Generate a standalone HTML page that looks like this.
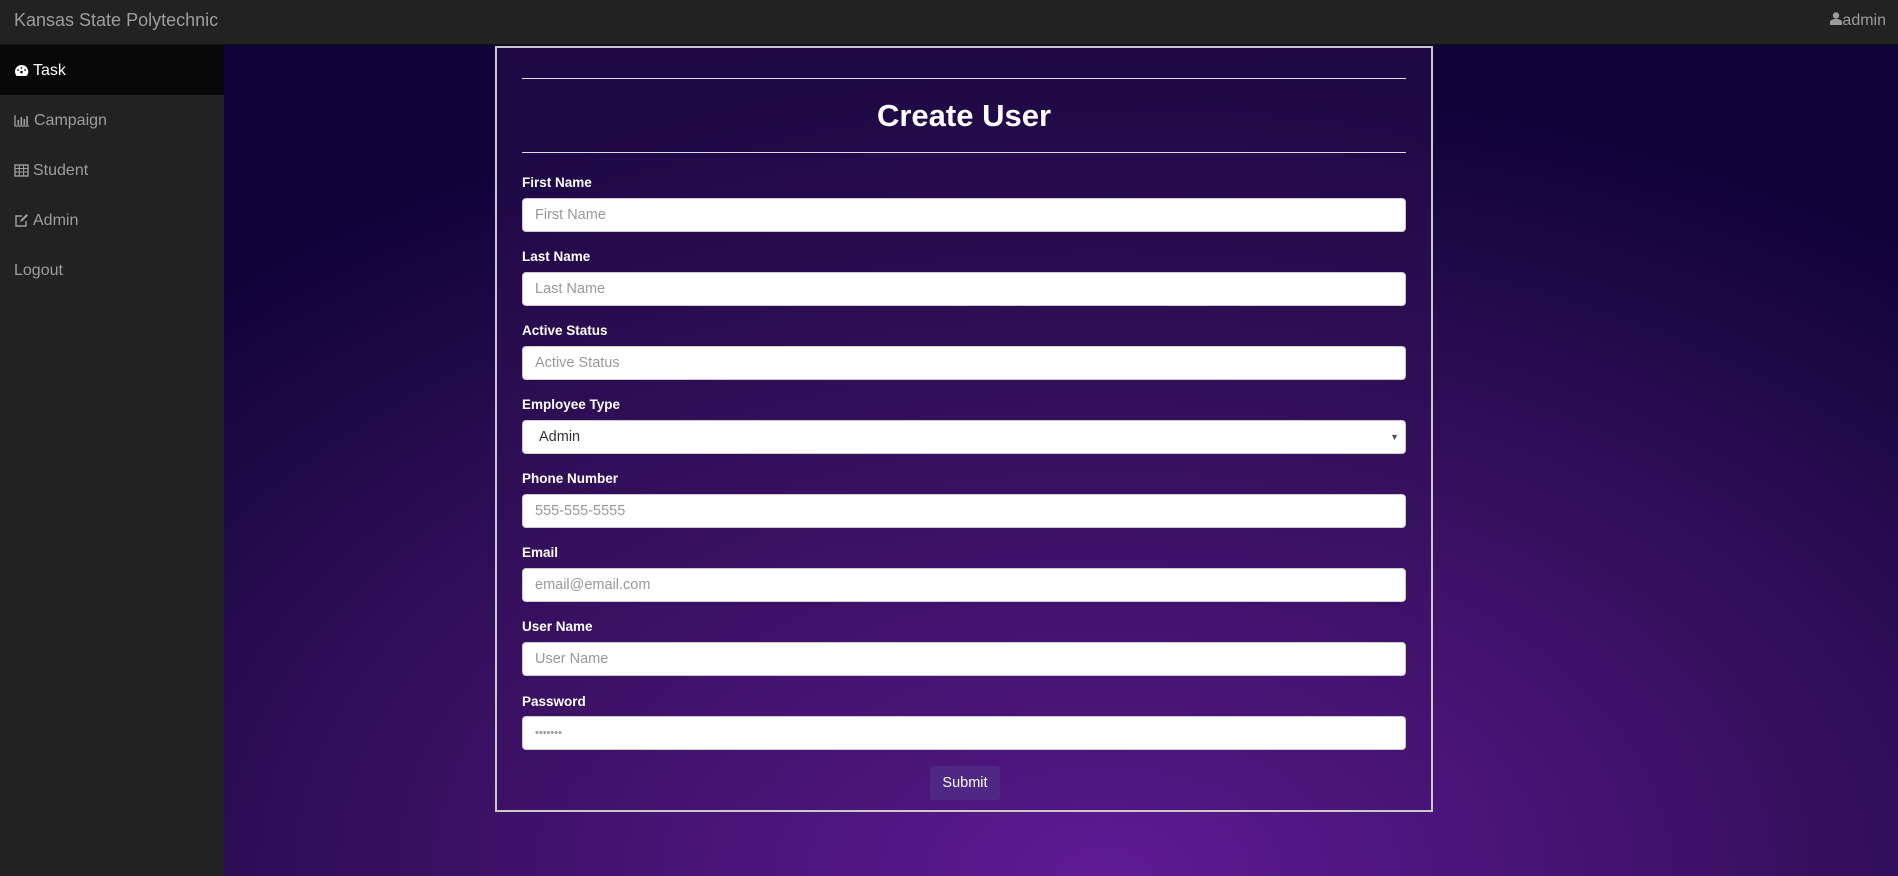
<!DOCTYPE html>
<html><head><meta charset="utf-8"><style>
*{box-sizing:border-box;margin:0;padding:0}
body{width:1898px;height:876px;overflow:hidden;font-family:"Liberation Sans",Arial,sans-serif;background:#222;position:relative}
.nav{position:absolute;left:0;top:0;width:1898px;height:45px;background:#222;border-bottom:1px solid #111}
.brand{position:absolute;left:14px;top:10px;font-size:18px;color:#9d9d9d}
.user{position:absolute;right:12px;top:12px;font-size:16px;color:#9d9d9d}
.side{position:absolute;left:0;top:45px;width:224px;height:831px;background:#222}
.item{height:50px;line-height:52px;padding-left:14px;font-size:16px;color:#9d9d9d}
.item.act{background:#080808;color:#fff}
.item svg{vertical-align:-2px;margin-right:4px}
.main{position:absolute;left:224px;top:45px;width:1674px;height:831px;
background:radial-gradient(ellipse 1300px 800px at 880px 831px,#5e1a94 0%,#4a1478 30%,#36105f 55%,#220a4a 78%,#10033a 100%)}
.panel{position:absolute;left:271px;top:1px;width:938px;height:766px;border:2px solid #c8c8c8;
background:linear-gradient(180deg,rgba(50,15,85,.45),rgba(60,18,100,.25))}
hr{position:absolute;left:25px;width:884px;border:0;border-top:1px solid #ddd}
h1{position:absolute;left:25px;width:884px;top:50px;text-align:center;color:#fff;font-size:31px;font-weight:bold}
label{position:absolute;left:25px;color:#fff;font-weight:bold;font-size:13.5px}
.f{position:absolute;left:25px;width:884px;height:34px;background:#fff;border:1px solid #ccc;border-radius:4px;color:#999;font-size:14.5px;line-height:32px;padding-left:12px}
.f.sel{color:#333;padding-left:16px}
.btn{position:absolute;left:433px;top:718px;width:70px;height:34px;background:#4f2785;border-radius:3px;color:#fff;font-size:14.5px;text-align:center;line-height:34px}
</style></head><body>
<div class="nav"><div class="brand">Kansas State Polytechnic</div>
<div class="user"><svg width="12" height="13" viewBox="0 0 12 13"><circle cx="6" cy="3.5" r="3.2" fill="#9d9d9d"/><path d="M0 13v-2.5C0 8 2.5 7 6 7s6 1 6 3.5V13z" fill="#9d9d9d"/></svg>admin</div></div>
<div class="side">
<div class="item act"><svg width="15" height="13" viewBox="0 0 15 13"><path d="M7.5 1A6.5 6.5 0 0 0 1 7.5c0 1.7.6 3.2 1.6 4.5h9.8A6.5 6.5 0 0 0 7.5 1z" fill="#fff"/><circle cx="7.5" cy="8" r="1.3" fill="#080808"/><circle cx="4" cy="6" r=".9" fill="#080808"/><circle cx="7.5" cy="4" r=".9" fill="#080808"/><circle cx="11" cy="6" r=".9" fill="#080808"/></svg>Task</div>
<div class="item"><svg width="16" height="13" viewBox="0 0 16 13"><path d="M1 1v11h14" stroke="#9d9d9d" stroke-width="1.3" fill="none"/><rect x="3.5" y="6" width="1.6" height="5" fill="#9d9d9d"/><rect x="6.5" y="3" width="1.6" height="8" fill="#9d9d9d"/><rect x="9.5" y="5" width="1.6" height="6" fill="#9d9d9d"/><rect x="12.3" y="2" width="1.6" height="9" fill="#9d9d9d"/></svg>Campaign</div>
<div class="item"><svg width="15" height="13" viewBox="0 0 15 13"><rect x="1" y="1" width="13" height="11" fill="none" stroke="#9d9d9d" stroke-width="1.4"/><path d="M1 4.5h13M1 8h13M5.3 1v11M9.6 1v11" stroke="#9d9d9d" stroke-width="1.1"/></svg>Student</div>
<div class="item"><svg width="15" height="13" viewBox="0 0 15 13"><path d="M8 2H2v10h10V7" fill="none" stroke="#9d9d9d" stroke-width="1.4"/><path d="M6 8l1-2.5L12.5 0 14 1.5 8.5 7z" fill="#9d9d9d"/></svg>Admin</div>
<div class="item">Logout</div>
</div>
<div class="main">
<div class="panel">
<hr style="top:30px"><h1>Create User</h1><hr style="top:104px">
<label style="top:127px">First Name</label><div class="f" style="top:150px">First Name</div>
<label style="top:201px">Last Name</label><div class="f" style="top:224px">Last Name</div>
<label style="top:275px">Active Status</label><div class="f" style="top:298px">Active Status</div>
<label style="top:349px">Employee Type</label><div class="f sel" style="top:372px">Admin<span style="position:absolute;right:6px;top:0;font-size:9px;color:#555">▼</span></div>
<label style="top:423px">Phone Number</label><div class="f" style="top:446px">555-555-5555</div>
<label style="top:497px">Email</label><div class="f" style="top:520px">email@email.com</div>
<label style="top:571px">User Name</label><div class="f" style="top:594px">User Name</div>
<label style="top:646px">Password</label><div class="f" style="top:668px;font-size:11px">•••••••</div>
<div class="btn">Submit</div>
</div>
</div>
</body></html>
